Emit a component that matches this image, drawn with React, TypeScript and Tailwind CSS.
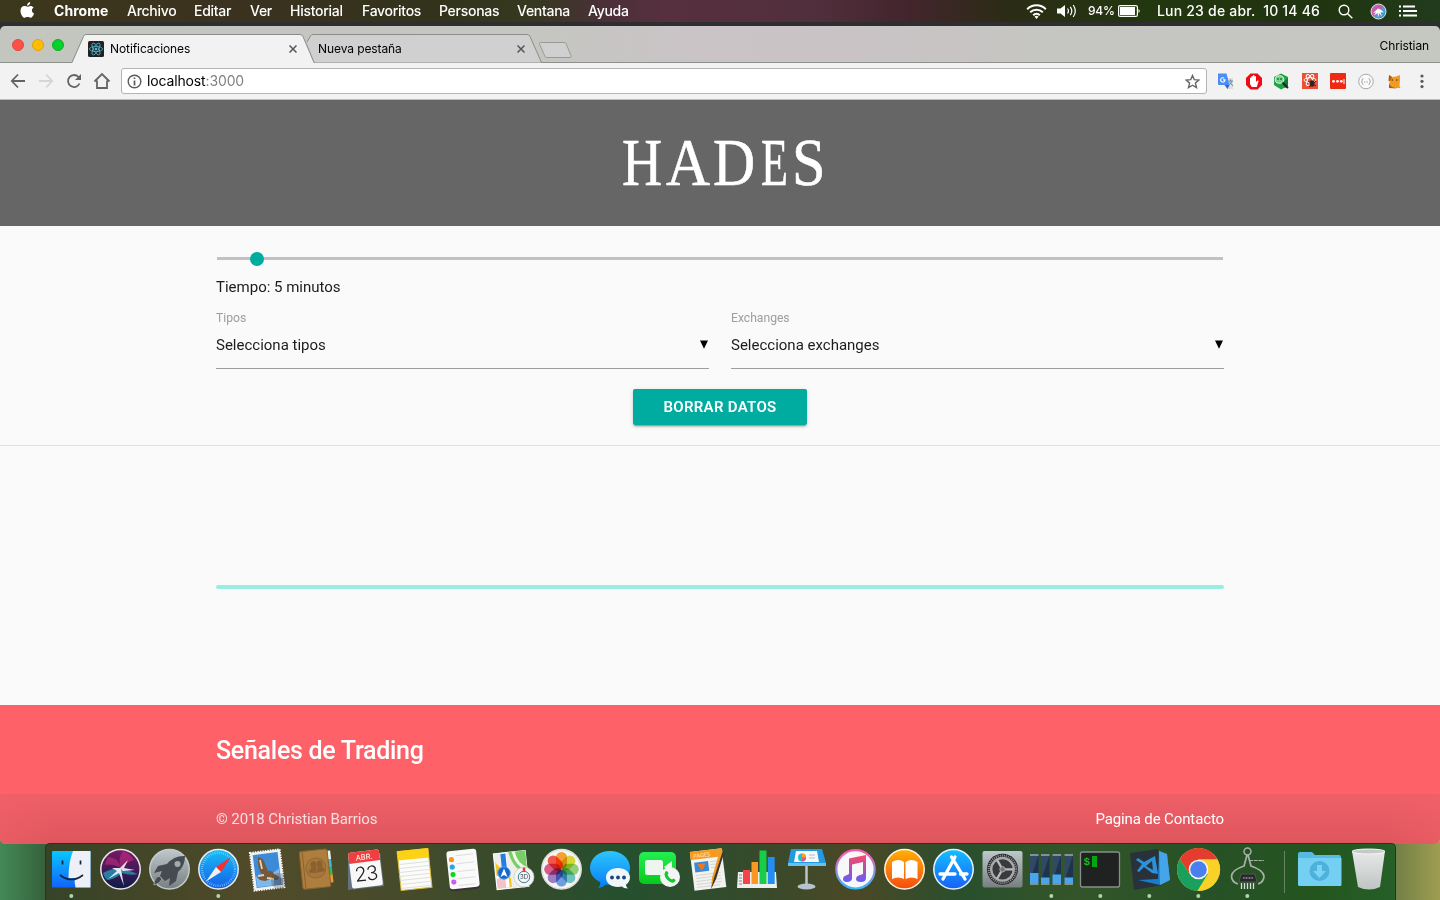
import React from "react";

const menus: [string, string][] = [
  ["Archivo", "w-[67px]"],
  ["Editar", "w-[56px]"],
  ["Ver", "w-[40px]"],
  ["Historial", "w-[72px]"],
  ["Favoritos", "w-[77px]"],
  ["Personas", "w-[78px]"],
  ["Ventana", "w-[71px]"],
  ["Ayuda", "w-[60px]"],
];

function MenuBar() {
  return (
    <div className="flex h-[26px] flex-none items-start border-b-4 border-[#2e2e30] bg-[linear-gradient(90deg,#3b381c_0%,#3b321f_15%,#33331c_30%,#363820_37%,#4a3038_42%,#572f3e_46%,#522f3d_56%,#43252d_63%,#2b2c15_70%,#22370f_80%,#20350f_92%,#223b1c_100%)] text-[14px] text-white">
      <svg className="ml-[20px] mt-[2px] h-[17px] w-[15px]" viewBox="0 0 15 17" fill="#fff">
        <path d="M10.2 0c.1 2.2-1.5 3.700-3.100 3.700C6.900 2 8.400.2 10.200 0zM7.500 4.700c.8 0 1.600-.8 3-.8 1.200 0 2.400.6 3.100 1.600-2.500 1.500-2.100 4.800.5 5.900-.6 1.900-2 4.300-3.600 4.300-1.100 0-1.500-.7-2.900-.7s-1.900.7-2.900.7C2.700 15.700.5 12 .5 8.900c0-3 1.800-4.800 3.900-4.800 1.300 0 2.300.6 3.100.6z" />
      </svg>
      <span className="ml-[19px] w-[73px] whitespace-nowrap text-[14px] font-bold leading-[22px] tracking-[0.05px]">Chrome</span>
      {menus.map(([t, c]) => (
        <span key={t} className={`${c} whitespace-nowrap text-[14px] font-medium leading-[22px] tracking-[-0.28px]`}>{t}</span>
      ))}
      <div className="ml-auto flex h-[22px] items-center">
        <svg className="h-[15px] w-[21px]" viewBox="0 0 21 15" fill="none" stroke="#fff" strokeWidth="2">
          <path d="M1.200 5.200a13.200 13.200 0 0 1 18.600 0M4.200 8.300a9 9 0 0 1 12.600 0M7.200 11.200a4.700 4.700 0 0 1 6.600 0" />
          <path d="M10.500 15l-2-2.300a3 3 0 0 1 4 0z" fill="#fff" stroke="none" />
        </svg>
        <svg className="ml-[9px] h-[14px] w-[22px]" viewBox="0 0 22 14" fill="none" stroke="#fff" strokeWidth="1.200">
          <path d="M1 4.500h3.500L9 1v12L4.500 9.500H1z" fill="#fff" stroke="none" />
          <path d="M11.500 4.500q2 2.500 0 5M14.300 2.800q3 4.200 0 8.400M17.200 1q4.200 6 0 12" />
        </svg>
        <span className="ml-[10px] w-[30px] whitespace-nowrap text-[12px] font-medium leading-[22px] tracking-[-0.2px]">94%</span>
        <svg className="h-[12px] w-[23px]" viewBox="0 0 23 12">
          <rect x=".6" y=".6" width="18.800" height="10.800" rx="1.500" fill="none" stroke="#fff" strokeWidth="1.200" />
          <path d="M2 2h15v8H2zM20.500 4q2.500 2 0 4z" fill="#fff" />
        </svg>
        <span className="ml-[16px] w-[181px] whitespace-pre text-[14px] font-medium leading-[22px] tracking-[0.2px]">Lun 23 de abr.  10 14 46</span>
        <svg className="h-[15px] w-[15px]" viewBox="0 0 15 15" fill="none" stroke="#fff" strokeWidth="1.400">
          <circle cx="6" cy="6" r="4.800" /><path d="M9.500 9.500l4.800 4.800" />
        </svg>
        <svg className="ml-[17px] h-[17px] w-[17px]" viewBox="0 0 17 17">
          <defs><linearGradient id="sm" x1="0" y1="0" x2="1" y2="1"><stop offset="0" stopColor="#45bce4" /><stop offset=".35" stopColor="#e44a9c" /><stop offset=".6" stopColor="#5c9cd0" /><stop offset="1" stopColor="#1f90b8" /></linearGradient></defs>
          <circle cx="8.500" cy="8.500" r="7.500" fill="url(#sm)" stroke="#e4e4e4" />
          <path d="M2.500 10.500L8 5.500l2.500 1L14 9.500l-3.500-.5 1.500 4.500L9 10l-.5 4.500L7.500 10 4 12.500l2-3.500z" fill="#fff" />
        </svg>
        <svg className="ml-[12px] mr-[23px] h-[12px] w-[18px]" viewBox="0 0 18 12" stroke="#fff" strokeWidth="1.900">
          <path d="M0 1.500h2M0 6h2M0 10.500h2M4 1.500h12M4 6h14M4 10.500h14" />
        </svg>
      </div>
    </div>
  );
}

function Close({ className }: { className: string }) {
  return (
    <svg className={`h-[8px] w-[8px] ${className}`} viewBox="0 0 8 8" stroke="#555" strokeWidth="1.500"><path d="M.5.500l7 7M7.500.5l-7 7" /></svg>
  );
}

function TabStrip() {
  return (
    <div className="flex-none bg-[#2e2e30]">
      <div className="flex h-[37px] rounded-t-[5px] border-b border-[#8e908d] bg-[linear-gradient(90deg,#c3c5bf_0%,#c5c6c2_38%,#c9c4c5_46%,#c9c3c5_60%,#c5c6c1_74%,#c5c7c1_100%)]">
        <div className="flex w-[72px] items-center gap-[8px] pl-[12px] pt-[2px]">
          <i className="h-[12px] w-[12px] rounded-full border border-[#e14740] bg-[#ff4f47]" />
          <i className="h-[12px] w-[12px] rounded-full border border-[#e0a300] bg-[#ffbd05]" />
          <i className="h-[12px] w-[12px] rounded-full border border-[#05b41f] bg-[#05d02c]" />
        </div>
        <div className="relative z-10 mt-[8px] flex h-[29px] w-[242px] items-center pl-[16px]">
          <svg className="absolute inset-0 h-[29px] w-[242px]" viewBox="0 0 242 29">
            <path d="M0 29L11.500 2.500Q12.500.500 14 .5H228Q230 .5 231 2.500L242 29z" fill="#f2f2f2" />
            <path d="M0 28.500L11.500 2.500Q12.500.500 14 .5H228Q230 .5 231 2.500L242 28.500" fill="none" stroke="#8b8d8a" />
          </svg>
          <svg className="relative h-[16px] w-[16px]" viewBox="0 0 16 16" fill="none" stroke="#50b8d2" strokeWidth=".8">
            <rect width="16" height="16" rx="1.500" fill="#222" stroke="none" />
            <ellipse cx="8" cy="8" rx="6.600" ry="2.600" /><ellipse cx="8" cy="8" rx="6.600" ry="2.600" transform="rotate(60 8 8)" /><ellipse cx="8" cy="8" rx="6.600" ry="2.600" transform="rotate(120 8 8)" />
            <circle cx="8" cy="8" r="1" fill="#8de" />
          </svg>
          <span className="relative ml-[6px] w-[179px] text-[12px] leading-[16px] tracking-[-0.09px] text-black">Notificaciones</span>
          <Close className="relative" />
        </div>
        <div className="relative mt-[8px] -ml-[8px] flex h-[29px] w-[236px] items-center pl-[12px]">
          <svg className="absolute inset-0 h-[29px] w-[236px]" viewBox="0 0 236 29">
            <path d="M1 8L4.500 2Q5.500.500 7 .5H221Q223 .5 224 2.500L235.500 28.500H9z" fill="#d0d0d0" />
            <path d="M1 8L4.500 2Q5.500.500 7 .5H221Q223 .5 224 2.500L235.500 28.500" fill="none" stroke="#8b8d8a" />
          </svg>
          <span className="relative w-[199px] text-[12px] leading-[16px] tracking-[-0.09px] text-black">Nueva pestaña</span>
          <Close className="relative" />
        </div>
        <svg className="-ml-[4px] mt-[15px] h-[18px] w-[36px]" viewBox="0 0 36 18"><path d="M2.500 1.500H26q1.500 0 2 1l5 12q.5 2-1 2H9q-1.500 0-2-1L1.500 3q-.5-1.500 1-1.500z" fill="#d0d0d0" stroke="#999b98" /></svg>
        <span className="ml-auto mr-[11px] mt-[12px] text-[12px] leading-[16px] tracking-[-0.12px] text-black">Christian</span>
      </div>
    </div>
  );
}

function Toolbar() {
  return (
    <div className="flex h-[37px] flex-none items-center border-b border-[#bcbcbc] bg-[#f2f2f2]">
      <svg className="ml-[10px] h-[18px] w-[102px]" viewBox="0 0 102 18" fill="none" stroke="#646464" strokeWidth="1.800">
        <path d="M15 9H2M8 2.500L1.800 9 8 15.500" />
        <path d="M29 9h13M36 2.500L42.200 9 36 15.500" stroke="#d5d5d5" />
        <path d="M69.500 11.500a6 6 0 1 1-1-6.500" /><path d="M71 2v6h-6z" fill="#646464" stroke="none" />
        <path d="M84.500 9.500L92 2l7.500 7.500M87 8.500V16h10V8.500" />
      </svg>
      <div className="ml-[9px] flex h-[26px] w-[1086px] items-center rounded-[3px] border border-[#b4b4b4] bg-white pl-[5px] pr-[6px]">
        <svg className="h-[15px] w-[15px]" viewBox="0 0 15 15" fill="none" stroke="#5a5a5a" strokeWidth="1.400"><circle cx="7.500" cy="7.500" r="6.300" /><path d="M7.500 6.500v5M7.500 3.500V5" strokeWidth="1.700" /></svg>
        <span className="ml-[5px] text-[14px] leading-[20px] tracking-[-0.14px] text-black">localhost<span className="text-[#808080]">:3000</span></span>
        <svg className="ml-auto h-[15px] w-[15px]" viewBox="0 0 15 15" fill="none" stroke="#666" strokeWidth="1.400"><path d="M7.500 1.500l1.800 4.200 4.600.4-3.500 3 1.100 4.500-4-2.400-4 2.400 1.100-4.500-3.500-3 4.600-.4z" /></svg>
      </div>
      <svg className="ml-[10px] h-[17px] w-[215px]" viewBox="0 0 215 17">
        <path d="M8 5h8v11h-6z" fill="#ddd" /><path d="M1 .5h8.500L12.500 12H2q-1 0-1-1z" fill="#4b8df8" /><path d="M7.500 12h5l-2 4z" fill="#3167cc" /><path d="M11.500 8H16M13.500 6.500v1.500M15 8q-1 3-3 4M12.500 9l3.500 4" stroke="#6d8ca5" fill="none" />
        <path d="M7.200 5.200a2.200 2.200 0 1 0 .8 1.700H6" fill="none" stroke="#fff" strokeWidth="1.100" />
        <path d="M33.500 .5h7L45 5v7l-4.500 4.500h-7L29 12V5z" fill="#f00a13" /><path d="M33 8.500V5q.7-.8 1.300 0V3.500q.8-.8 1.500 0V2.500q.8-.8 1.600 0v1q.8-.8 1.600 0V9l1.500-1.500q1.200-.4 1.100.6L39.800 14h-5L33 11z" fill="#fff" />
        <path d="M57 4l7-3.500L71 4v9l-7 3.500L57 12z" fill="#1fa444" /><path d="M65 10l6-5v8l-3 2z" fill="#137c38" /><ellipse cx="62.500" cy="6.500" rx="4.300" ry="3.800" fill="#75d38c" stroke="#e6f4e8" /><path d="M65.500 9.500l5.500 5.500" stroke="#222" strokeWidth="1.800" /><path d="M60 6h2M63 6h2" stroke="#16843a" strokeWidth="1.500" />
        <rect x="85" y="0" width="16" height="16" fill="#ec5035" /><g fill="none" stroke="#fff" strokeWidth="1"><ellipse cx="93" cy="7" rx="6" ry="2.300" /><ellipse cx="93" cy="7" rx="6" ry="2.300" transform="rotate(60 93 7)" /><ellipse cx="93" cy="7" rx="6" ry="2.300" transform="rotate(120 93 7)" /></g><ellipse cx="95" cy="10.500" rx="2.500" ry="3.300" fill="#3a2020" /><path d="M91 8l8 5M99 8l-7 6" stroke="#3a2020" />
        <rect x="113" y="0" width="16" height="16" rx="1" fill="#f02a12" /><g fill="#fff"><circle cx="116.500" cy="8.300" r="1.400" /><circle cx="120.500" cy="8.300" r="1.400" /><circle cx="124.300" cy="8.300" r="1.400" /><rect x="126.500" y="6" width="1" height="5" /></g>
        <circle cx="149" cy="8.500" r="7.300" fill="#fafafa" stroke="#a8a8a8" /><path d="M146.500 5.500q-1.500 0-1.300 1.500t-1 1.500q1.200 0 1 1.500t1.300 1.500M151.500 5.500q1.500 0 1.300 1.500t1 1.500q-1.200 0-1 1.500t-1.300 1.500" fill="none" stroke="#aaa" /><path d="M147 9h4" stroke="#aaa" strokeDasharray="1 .5" />
        <path d="M172 2l3 2 4-.5 4-1.500v5l-.5 6 1 2h-11l-.5-4 1-4z" fill="#f39b21" /><path d="M172 2l3 2-2 4-1.500 0zM172 11l3 3 5 1.500-8-.5z" fill="#a85d14" /><path d="M174.500 7h1.500M179 7h1.500" stroke="#754616" strokeWidth="1.500" />
        <g fill="#5a5a5a"><circle cx="205" cy="3" r="1.600" /><circle cx="205" cy="8.300" r="1.600" /><circle cx="205" cy="13.600" r="1.600" /></g>
      </svg>
    </div>
  );
}

function Select({ label, value }: { label: string; value: string }) {
  return (
    <div className="w-[493px]">
      <div className="text-[12.200px] leading-[16px] tracking-[-0.03px] text-[#9e9e9e]">{label}</div>
      <div className="flex h-[43px] items-center justify-between border-b border-[#9e9e9e] pb-[4px] text-[15px] text-[#1c1c1c]">
        <span className="leading-[20px]">{value}</span>
        <svg className="-mt-px mr-px h-[9px] w-[8px]" viewBox="0 0 8 9"><path d="M0 .5h8L4 8.700z" fill="#000" /></svg>
      </div>
    </div>
  );
}

function Wordmark() {
  return (
    <h1 className="ml-[622px] mt-[29px] flex font-['Liberation_Serif',serif] text-[67px] leading-[67px] text-white [-webkit-text-stroke:0.600px_#fff]">
      <span className="w-[44px] origin-left scale-x-[.83]">H</span>
      <span className="w-[47px] origin-left scale-x-[.91]">A</span>
      <span className="w-[47.500px] origin-left scale-x-[.87]">D</span>
      <span className="w-[31px] origin-left scale-x-[.66]">E</span>
      <span className="w-[30px] origin-left scale-x-[.9]">S</span>
    </h1>
  );
}

function Page() {
  return (
    <div className="flex h-[744px] flex-none flex-col overflow-hidden rounded-b-[6px] bg-[#fafafa] font-[Roboto,sans-serif]">
      <header className="flex h-[126px] flex-none bg-[#666]">
        <Wordmark />
      </header>
      <section className="flex h-[220px] flex-none flex-col border-b border-[#e0e0e0] px-[216px]">
        <div className="relative ml-px mt-[31px] h-[3px] w-[1006px] bg-[#c2c0c2]">
          <i className="absolute -top-[5px] left-[33px] h-[14px] w-[14px] rounded-full bg-[#00ab9f]" />
        </div>
        <div className="mt-[16px] text-[15px] leading-[22px] text-[#1c1c1c]">Tiempo: 5 minutos</div>
        <div className="mt-[12px] flex justify-between">
          <Select label="Tipos" value="Selecciona tipos" />
          <Select label="Exchanges" value="Selecciona exchanges" />
        </div>
        <button className="mt-[20px] h-[36px] w-[174px] self-center rounded-[2px] bg-[#00ab9f] text-[15px] font-semibold tracking-[0.3px] text-white shadow-[0_2px_2px_rgba(0,0,0,.14),0_1px_5px_rgba(0,0,0,.12),0_3px_1px_-2px_rgba(0,0,0,.2)]">BORRAR DATOS</button>
      </section>
      <section className="flex h-[259px] flex-none flex-col px-[216px] pt-[139px]">
        <div className="h-[4px] rounded-[2px] bg-[#99eee2]" />
      </section>
      <footer className="flex flex-1 flex-col bg-[#ff6169] text-white">
        <h5 className="h-[89px] pl-[216px] pt-[31px] text-[25px] font-medium leading-[30px] tracking-[-0.28px]">Señales de Trading</h5>
        <div className="flex flex-1 justify-between bg-[linear-gradient(90deg,#f0606890_0%,transparent_4%,transparent_96%,#f0606890_100%),linear-gradient(180deg,#ef5f68,#de565d)] px-[216px] pt-[14px] text-[15px] leading-[22px]">
          <span className="tracking-[-0.1px] text-white/80">© 2018 Christian Barrios</span>
          <span className="tracking-[-0.12px]">Pagina de Contacto</span>
        </div>
      </footer>
    </div>
  );
}

const Dial = ({ stroke, fill }: { stroke: string; fill: string }) => <circle cx="24.500" cy="26.300" r="19.700" fill={fill} stroke={stroke} strokeWidth="1.500" />;

const icons: React.ReactNode[] = [
  <g key="finder"><rect x="5" y="8" width="38.500" height="36.500" rx="1" fill="url(#gFinder)" /><path d="M26 8h17.500v36.500H28.500q-1-5-1-9.500h-6q0-16 4.500-27z" fill="#edf1f7" /><path d="M15.500 17.500v4M33.500 17.500v4" stroke="#12233a" strokeWidth="1.700" /><path d="M13 32q11.500 9 23 0" fill="none" stroke="#12233a" strokeWidth="1.700" /></g>,
  <g key="siri"><Dial stroke="#e8e8ec" fill="url(#gSiri)" /><path d="M7 30Q18 24 25 26q8 1 17 5-8 2-16-1-8 7-15 7-3-3-4-7z" fill="#1fb5c9" opacity=".65" /><path d="M12 14q10 0 13 11-8-5-16-3 1-5 3-8zM27 8q-6 8-2 17 6-6 13-8-4-7-11-9z" fill="#e0338f" opacity=".45" /><path d="M25 26l3 17-5-13-11 6 9-8-5-3 8 0 8-8-4 8 11 2-12 1z" fill="#fff" opacity=".85" /></g>,
  <g key="rocket"><Dial stroke="#c3cccd" fill="url(#gGrey)" /><path d="M40 13q-11-.5-18 8l-9 2-4 7 8-2-2 5 5 5 5-3-1 8 7-5 2-9q7-6 7-16z" fill="#454b50" /><circle cx="32.500" cy="21" r="3" fill="#a2aaac" /><path d="M14 33q-5 2-5 9 6-1 8-6z" fill="#454b50" stroke="#99a1a3" /></g>,
  <g key="safari"><Dial stroke="#e9edf0" fill="url(#gBlue)" /><circle cx="24.500" cy="26.300" r="16.500" fill="none" stroke="#9fdcff" strokeWidth="2.500" strokeDasharray=".7 1.460" opacity=".8" /><path d="M37 14L22 24l5 5z" fill="#fb2d2d" /><path d="M12 38.500L22 24l5 5z" fill="#f0f0f0" /></g>,
  <g key="mail"><g transform="rotate(-7 24 26)"><rect x="9" y="8" width="30" height="38" fill="#eef0ef" stroke="#f7f7f7" strokeWidth="2" strokeDasharray="1.500 1" /><rect x="11.500" y="10.500" width="25" height="33" fill="#3c8bd8" /><path d="M12 32q12 3 24-5v16H12z" fill="#7fb8e8" /></g><path d="M15 14q6 1 7 7l3 7q4-1 6 3l6 3-3 3-6-1-6 2-5-1-3-3 5-2q-5-8-4-18z" fill="#75593a" /><path d="M17 17l2 9M15 33l6-1M24 35l7 1" stroke="#e5d2b3" strokeWidth="1.800" fill="none" /><circle cx="36" cy="38" r="8" fill="#444" opacity=".28" /><path d="M31 35h9v7h-9z" fill="#29395a" opacity=".4" /></g>,
  <g key="contacts"><g transform="rotate(-6 24 26)"><path d="M35 9h5v9h-5z" fill="#eceff0" /><path d="M35 18h5v8h-5z" fill="#40b9dc" /><path d="M35 26h5v7h-5z" fill="#35b95c" /><path d="M35 33h5v8h-5z" fill="#ee9c2e" /><rect x="9" y="7" width="28" height="38" rx="2" fill="#ad7e3e" stroke="#8b612c" /><path d="M12 7v38" stroke="#8b6230" /><circle cx="24" cy="25" r="10" fill="#a57839" stroke="#926832" /><path d="M16.500 29q0-3 3-4-2-7 2.500-7t2.500 7l-.5 5zM25 30q-1-4 1-5-2-7 2-7 4 0 2.500 7 2.500 1 2 4z" fill="#8b622f" /></g></g>,
  <g key="cal"><path d="M7 14L39 10l4 33-36 4z" fill="#64737e" /><g transform="rotate(-7 24 26)"><rect x="9" y="8" width="31" height="36" rx="2" fill="#f8f8f8" /><path d="M9 10q0-2 2-2h27q2 0 2 2v9H9z" fill="#f03f40" /><text x="24.500" y="16.700" textAnchor="middle" fontFamily="Inter, sans-serif" fontSize="7.500" fill="#fff">ABR.</text><text x="24.500" y="37.800" textAnchor="middle" fontFamily="Inter, sans-serif" fontWeight="300" fontSize="20" letterSpacing="-.7" fill="#222">23</text></g></g>,
  <g key="notes" transform="rotate(-6 24 26)"><rect x="9" y="7" width="31" height="39" fill="#fbfbf8" stroke="#d9b72a" /><rect x="9" y="6.500" width="31" height="9.500" fill="#fcd116" /><path d="M9 20h31M9 24h31M9 28h31M9 32h31M9 36h31M9 40h31M9 44h31" stroke="#dadada" strokeWidth=".8" /></g>,
  <g key="rem" transform="rotate(-6 24 26)"><rect x="9" y="8" width="30" height="39" rx="3" fill="#333" /><rect x="9" y="7" width="30" height="38" rx="3" fill="#fafafa" /><path d="M18 12h18M18 20h18M18 28h18M18 35h18M18 42h17" stroke="#ddd" /><circle cx="13.500" cy="15.500" r="2.600" fill="#ff9115" /><circle cx="13.500" cy="23" r="2.600" fill="#28a6ed" /><circle cx="13.500" cy="30.500" r="2.600" fill="#11d51e" /><circle cx="13.500" cy="38" r="2.600" fill="#cd5af3" /></g>,
  <g key="maps"><g transform="rotate(-6 24 26)"><rect x="7" y="9" width="32" height="36" fill="#f0eee8" stroke="#fff" /><path d="M22 9h17v23q-13-3-17-23z" fill="#75cf62" /><path d="M27 9q2 14 12 18" fill="none" stroke="#f6f3ea" strokeWidth="3" /><path d="M8 18l14 17v9H8z" fill="#f6c52c" /><path d="M8 34l14-9M18 10v34" stroke="#fff" strokeWidth="3.500" /><path d="M14 10h5v18h-5z" fill="#267ee2" /><path d="M8 34h8v10H8z" fill="#f5c4ca" /></g><circle cx="16" cy="30" r="6.200" fill="#1768ce" stroke="#4b9bee" /><path d="M16 25.500l3.500 8.500-3.500-2-3.500 2z" fill="#fff" /><circle cx="36" cy="34" r="10" fill="#f2f4f5" stroke="#c7cacd" strokeWidth=".7" /><circle cx="36" cy="34" r="5.700" fill="none" stroke="#487f99" /><text x="36" y="36.300" fontSize="6" textAnchor="middle" fontFamily="Inter, sans-serif" fill="#345">3D</text><path d="M36 24.500v4" stroke="#ee3939" strokeWidth="2.500" /></g>,
  <g key="photos"><Dial stroke="#ddd" fill="#f5f5f4" />{["#ff9d1a", "#d9dd29", "#8fd36c", "#62c5c2", "#669be4", "#9874c6", "#dd4f83", "#fb493c"].map((c, i) => <rect key={c} x="19" y="9" width="11" height="17" rx="5.500" fill={c} opacity=".9" className="mix-blend-multiply" transform={`rotate(${i * 45} 24.500 26.300)`} />)}</g>,
  <g key="msg"><path d="M24 8c11 0 20 7 20 17s-9 17-20 17q-2 0-4-.4-3 3-8 3.400 3-3 2-6C8 36 4 31 4 25 4 15 13 8 24 8z" fill="url(#gMsg)" /><path d="M32 25c7 0 12 4 12 9.500 0 3-2 6-4 7 0 2 1 3 2 4-3 0-5-1-6-2l-4 .5c-7 0-12-4-12-9.500S25 25 32 25z" fill="#f1f6fa" /><g fill="#18457b"><circle cx="26" cy="34.500" r="1.900" /><circle cx="32" cy="34.500" r="1.900" /><circle cx="38" cy="34.500" r="1.900" /></g></g>,
  <g key="ft"><rect x="4" y="9" width="37" height="32" rx="5" fill="url(#gGreen)" /><rect x="10" y="17" width="18" height="15" rx="2.500" fill="#eef5ee" /><path d="M29 24l8-6v13z" fill="#eef5ee" /><circle cx="35" cy="34" r="10" fill="#f3f5f3" /><path d="M30.500 28.500q1.500-1.500 3 1.500l-1 2q1.500 3.500 4.500 4.500l1.500-1q3 1.500 1.500 3-3 3-7.500-1.500t-2-8.500z" fill="#12c82f" /></g>,
  <g key="pages"><g transform="rotate(-7 24 26)"><rect x="8" y="7" width="32" height="39" fill="#f2f2ef" /><rect x="8" y="7" width="32" height="8" fill="#f69b20" /><text x="11" y="13.500" fontFamily="Open Sans, sans-serif" fontSize="5.500" fill="#fff3d5">PAGES</text><rect x="11" y="18" width="14" height="10" fill="#3a8bd5" /><path d="M14 20h8l-3 6h-2z" fill="#f27621" /><path d="M27 19h10M27 22h10M27 25h10M11 31h25M11 34h25M11 37h25M11 40h25M11 43h23" stroke="#cfcfcf" strokeWidth=".8" /></g><path d="M36 7l4 1-8 28-5 10 1-11z" fill="#f09b24" /><path d="M39 7.500l1.500 1L32 36l-5 10 3-11z" fill="#353535" /></g>,
  <g key="numbers"><path d="M5 29h38l1 16H4z" fill="#eee" /><path d="M6 32h3M6 35h3M6 38h3M6 41h3" stroke="#888" /><rect x="10" y="27" width="7" height="14" fill="#f44444" /><rect x="18.500" y="19" width="6.500" height="22" fill="#f99923" /><rect x="26.500" y="7.500" width="7" height="33.500" fill="#18cd4a" /><rect x="34.700" y="14" width="7" height="27" fill="#258def" /></g>,
  <g key="keynote"><path d="M9 6h31l4 14H6z" fill="#2599df" /><path d="M6 20h38v3H6z" fill="#66c1ef" /><path d="M14 8h21l2 11H12z" fill="#f6f8f7" /><circle cx="20" cy="14.500" r="4" fill="#18c4d3" /><path d="M20 14.500v-4a4 4 0 0 1 4 4z" fill="#ffa414" /><path d="M20 14.500h4a4 4 0 0 1-4 4z" fill="#e85388" /><path d="M27 12h6M27 15h6" stroke="#bbb" /><path d="M24.500 23v19" stroke="#bcc5cd" strokeWidth="2.500" /><ellipse cx="24.500" cy="43.500" rx="9" ry="3" fill="#b7c4cf" /></g>,
  <g key="itunes"><circle cx="24.500" cy="26.300" r="19.200" fill="#f8f7fa" stroke="url(#gRing)" strokeWidth="2.200" /><path d="M18 15.500L35 12v23q0 4-5 4t-5-3 4-4l3-1V19l-11 2.500V36q-1 3-5 3t-4-3q0-3 4-4l2-1z" fill="url(#gNote)" /></g>,
  <g key="books"><Dial stroke="#fff2e2" fill="url(#gOrange)" /><path d="M12 19q7-4 12 0v17q-6-3-12 0zM25.500 19q6-4 12 0v17q-6-3-12 0z" fill="#fff" /></g>,
  <g key="store"><Dial stroke="#e8f3ff" fill="url(#gStore)" /><path d="M26 14L14 36M22.500 14L36 36M11 31h15M31.500 31H38" stroke="#fff" strokeWidth="3.300" strokeLinecap="round" /></g>,
  <g key="prefs"><rect x="4.500" y="8" width="40" height="36.500" rx="2" fill="url(#gGrey)" /><circle cx="24.500" cy="26.300" r="15.500" fill="#232425" /><circle cx="24.500" cy="26.300" r="13.800" fill="none" stroke="#9c9ea0" strokeWidth="2" strokeDasharray="1 1.060" /><circle cx="24.500" cy="26.300" r="11.300" fill="#393a3c" stroke="#a7a9ab" strokeWidth="2.400" /><path d="M24.500 26.300H35M24.500 26.300l-5.500-9.500M24.500 26.300L19 36" stroke="#b9bbbe" strokeWidth="2.300" /><circle cx="24.500" cy="26.300" r="2.700" fill="#777" stroke="#aaa" /></g>,
  <g key="monitor">{[[3, 30], [14, 34.500], [25.500, 31.500], [37.500, 34.500]].map(([x, y]) => <g key={x}><rect x={x} y="11" width="8.500" height="30" fill="#304a66" /><path d={`M${x} 38L${x + 8.5} 12v26z`} fill="#1d344e" /><rect x={x} y={y} width="8.500" height={40 - y} fill="#4ba5ed" /><path d={`M${x} 12h8.500M${x} 41h8.500`} stroke="#9da9a8" strokeWidth="1.300" /></g>)}</g>,
  <g key="term"><rect x="4.500" y="9" width="39" height="35" rx="2" fill="#202221" stroke="#85908a" strokeWidth="1.300" /><text x="7.500" y="22" fontFamily="Liberation Mono, monospace" fontSize="11" fontWeight="700" fill="#0bc41b">$</text><rect x="16" y="13" width="5" height="11" fill="#05a711" /></g>,
  <g key="code"><path d="M5 10l28-4 4 36-28 5z" fill="#29323a" /><path d="M34 8l8 3 3 26-10 5-22-5 20-1z" fill="#1a7dcb" /><path d="M34 8l8 3 3 26-10 5z" fill="#45a4ea" /><path d="M30 13l3 18-6-1-8-6-5 5-2-1 5-7-6-4 2-2 6 4zM27 18l-6 5 7 4z" fill="#2d91da" fillRule="evenodd" /></g>,
  <g key="chrome"><circle cx="24.500" cy="26.500" r="21.500" fill="#fad126" /><path d="M5.800 16A21.500 21.500 0 0 1 43.500 16.500H24.500L15.500 31z" fill="#e43d2f" /><path d="M5.800 16A21.500 21.500 0 0 0 23.500 48L34 31H15.500z" fill="#19a05d" /><path d="M24.500 16.500h19A21.500 21.500 0 0 1 23.500 48L34 31z" fill="#fad126" /><circle cx="24.500" cy="26.500" r="9.800" fill="#f4f4f4" /><circle cx="24.500" cy="26.500" r="8.300" fill="#4a80ee" /></g>,
  <g key="caliper" fill="none" stroke="#a9b0a6" strokeWidth="1.700"><circle cx="24.500" cy="8.500" r="3.500" strokeWidth="1.500" /><path d="M24 12l-3 11Q9 27 8.500 33q0 6 6.500 8M25 12l3 11q12 4 13 10 0 6-6 8" /><path d="M26 17.500h15" strokeWidth="1" strokeDasharray="4 .7" /><path d="M18 31h14l2 8H16z" fill="#28292b" stroke="#555" strokeWidth="1" /><path d="M20 35h10" stroke="#777" strokeWidth="2" strokeDasharray="1 .5" /><path d="M18.500 40v6M21.500 40v6M24.500 40v6M27.500 40v6M30.500 40v6" stroke="#dadada" strokeWidth="1.300" /></g>,
];

function Dock() {
  return (
    <div className="relative -mt-px flex h-[57px] w-[1351px] flex-none self-center rounded-t-[5px] border border-b-0 border-[#263222] bg-[linear-gradient(90deg,#354428_0%,#414527_6%,#514b2b_16%,#454b2b_27%,#334b2b_36%,#25502f_43%,#374a2b_53%,#4b4826_60%,#294f2d_68%,#345529_76%,#275127_86%,#24551f_94%,#265f28_100%)] pl-[1px]">
      {icons.map((icon, i) => (
        <svg key={i} className="-mt-px h-[57px] w-[49px] flex-none" viewBox="0 0 49 57">
          {icon}
          {[0, 3, 20, 21, 22, 23, 24].includes(i) && <circle cx="24.300" cy="53" r="2" fill="#aad9a7" />}
        </svg>
      ))}
      <i className="ml-[12px] mt-[7px] h-[42px] w-px flex-none bg-[#668463]" />
      <svg className="-mt-px ml-[11px] h-[57px] w-[98px] flex-none" viewBox="0 0 98 57">
        <path d="M2 11q0-2 2-2h12l3 3h24q2 0 2 2v28q0 1-2 1H4q-2 0-2-2z" fill="#56bae2" /><path d="M2 15h43.500v27q0 1-2 1H4q-2 0-2-2z" fill="#73d0f3" />
        <circle cx="23.500" cy="28" r="10" fill="#4db1dc" /><path d="M21 22h5v6h4l-6.500 7-6.500-7h4z" fill="#7cd4f4" />
        <path d="M56 8q17-4 33 0l-5 36q-11 5-22 0z" fill="url(#gTrash)" /><ellipse cx="72.500" cy="8.500" rx="16.500" ry="2.500" fill="#c7c9c8" stroke="#f5f5f5" />
      </svg>
    </div>
  );
}

const gradients: [string, string, string][] = [
  ["gFinder", "#09c7ff", "#1263fb"], ["gSiri", "#7b1765", "#0d1b49"], ["gGrey", "#bec7c9", "#777f81"], ["gBlue", "#18bcf4", "#1460e8"],
  ["gMsg", "#2dc5ff", "#087df5"], ["gGreen", "#23ef52", "#07c91c"], ["gOrange", "#ffb003", "#f64b10"], ["gStore", "#15bfff", "#1760f8"],
  ["gRing", "#fc58a5", "#38b9fc"], ["gNote", "#ff4664", "#625ff6"], ["gTrash", "#e9ebeb", "#bfc5c3"],
];

export default function App() {
  return (
    <div className="flex h-[900px] w-[1440px] flex-col overflow-hidden bg-[linear-gradient(90deg,#448957_0%,#37633c_3%,#333_6%,#334229_93%,#728146_97%,#a09d51_100%)] font-[Inter,sans-serif]">
      <svg className="absolute h-0 w-0">
        <defs>{gradients.map(([id, a, b]) => <linearGradient key={id} id={id} x1="0" y1="0" x2="0" y2="1"><stop stopColor={a} /><stop offset="1" stopColor={b} /></linearGradient>)}</defs>
      </svg>
      <MenuBar />
      <TabStrip />
      <Toolbar />
      <Page />
      <Dock />
    </div>
  );
}
